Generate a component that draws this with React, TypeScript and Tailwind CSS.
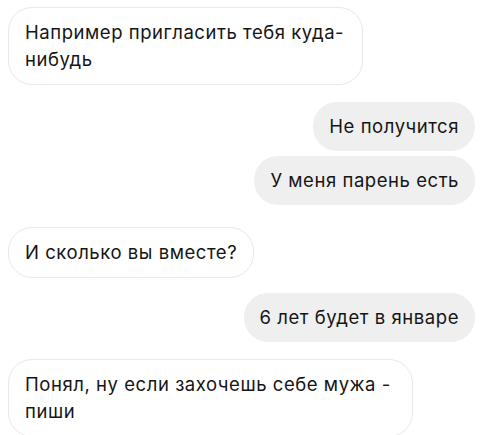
import React from 'react';

type Message = {
  lines: string[];
  mine: boolean;
  className: string;
};

// spacing between bubbles taken from the screenshot
const messages: Message[] = [
  { lines: ['Например пригласить тебя куда-', 'нибудь'], mine: false, className: 'mt-[7px] w-[355px]' },
  { lines: ['Не получится'], mine: true, className: 'mt-[17px]' },
  { lines: ['У меня парень есть'], mine: true, className: 'mt-[5px]' },
  { lines: ['И сколько вы вместе?'], mine: false, className: 'mt-[22px]' },
  { lines: ['6 лет будет в январе'], mine: true, className: 'mt-[15px]' },
  { lines: ['Понял, ну если захочешь себе мужа -', 'пиши'], mine: false, className: 'mt-[17px] w-[405px]' },
];

const Bubble: React.FC<{ message: Message }> = ({ message }) => (
  <div
    className={[
      'rounded-[24px] px-4 py-[11px] text-[18.5px] leading-[27px] tracking-[0.55px] whitespace-nowrap text-[#151515]',
      message.mine
        ? 'self-end bg-[#efefef]'
        : 'self-start border border-[#e9e9e9] bg-white',
      message.className,
    ].join(' ')}
  >
    {message.lines.map((line, i) => (
      <div key={i}>{line}</div>
    ))}
  </div>
);

export default function App() {
  return (
    <div
      className="flex h-[435px] w-[483px] flex-col bg-white pl-2 pr-2"
      style={{ fontFamily: 'Inter, "Liberation Sans", Arial, sans-serif' }}
    >
      {messages.map((m, i) => (
        <Bubble key={i} message={m} />
      ))}
    </div>
  );
}
